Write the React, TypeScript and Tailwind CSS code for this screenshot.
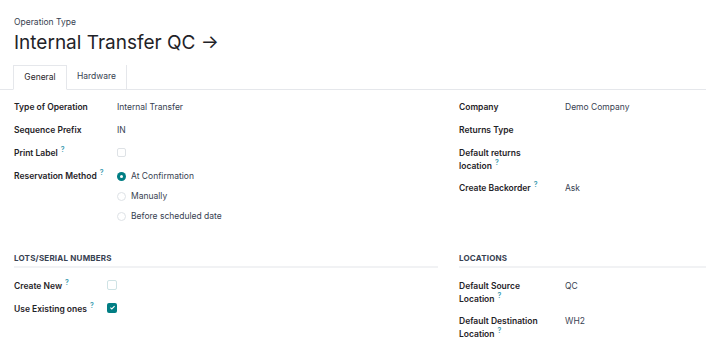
import React from "react";

const Help = () => (
  <sup className="ml-[3px] text-[7px] font-semibold text-[#3a9bb0]">?</sup>
);

function Radio({ checked, label }: { checked?: boolean; label: string }) {
  return (
    <div className="flex h-[20px] items-center gap-[5px]">
      {checked ? (
        <span className="flex h-[9px] w-[9px] items-center justify-center rounded-full bg-[#017e84]">
          <span className="h-[3px] w-[3px] rounded-full bg-white" />
        </span>
      ) : (
        <span className="h-[9px] w-[9px] rounded-full border border-[#dee2e6] bg-white" />
      )}
      <span className="text-[#374151]">{label}</span>
    </div>
  );
}

function Row({
  label,
  children,
  labelW,
  h = "h-[23px]",
}: {
  label: React.ReactNode;
  children?: React.ReactNode;
  labelW: string;
  h?: string;
}) {
  return (
    <div className={`flex items-start ${h}`}>
      <div className={`${labelW} shrink-0 font-semibold text-[#1f2328] leading-[13px]`}>
        {label}
      </div>
      <div className="leading-[13px] text-[#374151]">{children}</div>
    </div>
  );
}

export default function App() {
  return (
    <div
      className="h-[358px] w-[706px] overflow-hidden bg-white text-[8.5px] text-[#1f2328]"
      style={{ fontFamily: "Inter, 'Noto Sans', sans-serif" }}
    >
      {/* header */}
      <div className="px-[14px] pt-[16px]">
        <div className="text-[8.5px] text-[#374151]">Operation Type</div>
        <h1 className="mt-[1px] text-[19px] leading-[26px] text-[#1f2328]">
          Internal Transfer QC →
        </h1>
      </div>

      {/* tabs */}
      <div className="mt-[9px] flex border-b border-[#e5e7eb] pl-[13px]">
        <div className="-mb-px flex h-[25px] w-[54px] items-center justify-center border border-b-white border-[#e5e7eb] bg-white text-[#1f2328]">
          General
        </div>
        <div className="flex h-[24px] w-[60px] items-center justify-center border-r border-[#e5e7eb] text-[#374151]">
          Hardware
        </div>
      </div>

      {/* main fields */}
      <div className="flex pt-[11px] pl-[14px]">
        <div className="w-[424px] shrink-0">
          <Row label="Type of Operation" labelW="w-[103px]">
            Internal Transfer
          </Row>
          <Row label="Sequence Prefix" labelW="w-[103px]">
            IN
          </Row>
          <Row
            label={
              <>
                Print Label
                <Help />
              </>
            }
            labelW="w-[103px]"
          >
            <span className="mt-[1px] block h-[9px] w-[9px] rounded-[2px] border border-[#dee2e6]" />
          </Row>
          <div className="flex">
            <div className="w-[103px] shrink-0 font-semibold leading-[13px]">
              Reservation Method
              <Help />
            </div>
            <div className="-mt-[3px] flex flex-col">
              <Radio checked label="At Confirmation" />
              <Radio label="Manually" />
              <Radio label="Before scheduled date" />
            </div>
          </div>
        </div>

        <div className="ml-[21px] flex-1">
          <Row label="Company" labelW="w-[106px]">
            Demo Company
          </Row>
          <Row label="Returns Type" labelW="w-[106px]" />
          <Row
            label={
              <>
                Default returns
                <br />
                location
                <Help />
              </>
            }
            labelW="w-[106px]"
            h="h-[35px]"
          />
          <Row
            label={
              <>
                Create Backorder
                <Help />
              </>
            }
            labelW="w-[106px]"
          >
            Ask
          </Row>
        </div>
      </div>

      {/* sections */}
      <div className="mt-[25px] flex pl-[14px]">
        <div className="w-[424px] shrink-0">
          <div className="border-b-2 border-[#f1f2f4] pb-[2px] text-[8px] font-bold tracking-[0.2px] text-[#374151]">
            LOTS/SERIAL NUMBERS
          </div>
          <div className="pt-[12px]">
            <Row
              label={
                <>
                  Create New
                  <Help />
                </>
              }
              labelW="w-[93px]"
            >
              <span className="block h-[10px] w-[10px] rounded-[2px] border border-[#cfe3e5]" />
            </Row>
            <Row
              label={
                <>
                  Use Existing ones
                  <Help />
                </>
              }
              labelW="w-[93px]"
            >
              <span className="flex h-[10px] w-[10px] items-center justify-center rounded-[2px] bg-[#017e84]">
                <svg viewBox="0 0 10 10" className="h-[7px] w-[7px]">
                  <path d="M2 5.2 L4 7 L8 3" fill="none" stroke="white" strokeWidth="1.6" />
                </svg>
              </span>
            </Row>
          </div>
        </div>

        <div className="ml-[21px] flex-1">
          <div className="border-b-2 border-[#f1f2f4] pb-[2px] text-[8px] font-bold tracking-[0.2px] text-[#374151]">
            LOCATIONS
          </div>
          <div className="pt-[12px]">
            <Row
              label={
                <>
                  Default Source
                  <br />
                  Location
                  <Help />
                </>
              }
              labelW="w-[106px]"
              h="h-[35px]"
            >
              QC
            </Row>
            <Row
              label={
                <>
                  Default Destination
                  <br />
                  Location
                  <Help />
                </>
              }
              labelW="w-[106px]"
              h="h-[35px]"
            >
              WH2
            </Row>
          </div>
        </div>
      </div>
    </div>
  );
}
